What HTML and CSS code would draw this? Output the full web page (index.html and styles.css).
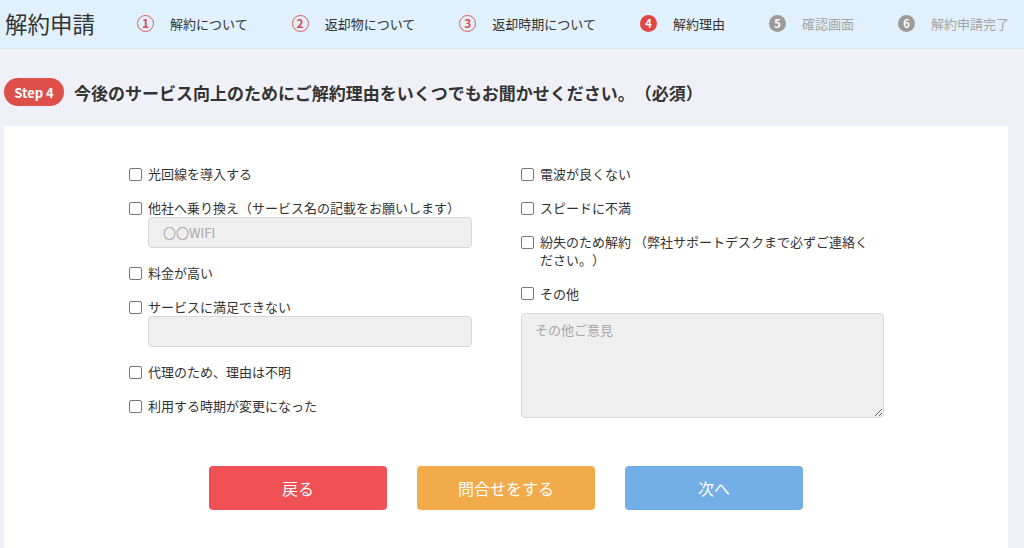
FILE: index.html
```html
<!DOCTYPE html>
<html lang="ja">
<head>
<meta charset="utf-8">
<title>解約申請</title>
<link rel="stylesheet" href="styles.css">
</head>
<body>
<header class="topbar">
  <h1 class="title">解約申請</h1>
  <ol class="steps">
    <li class="step done"><span class="num">1</span><span class="label">解約について</span></li>
    <li class="step done"><span class="num">2</span><span class="label">返却物について</span></li>
    <li class="step done"><span class="num">3</span><span class="label">返却時期について</span></li>
    <li class="step current"><span class="num">4</span><span class="label">解約理由</span></li>
    <li class="step todo"><span class="num">5</span><span class="label">確認画面</span></li>
    <li class="step todo"><span class="num">6</span><span class="label">解約申請完了</span></li>
  </ol>
</header>

<div class="heading">
  <span class="badge">Step 4</span>
  <h2 class="question">今後のサービス向上のためにご解約理由をいくつでもお聞かせください。（必須）</h2>
</div>

<main class="card">
  <div class="reasons">
    <div class="col">
      <div class="item"><label class="check"><span class="box"></span><span class="text">光回線を導入する</span></label></div>
      <div class="item">
        <label class="check"><span class="box"></span><span class="text">他社へ乗り換え（サービス名の記載をお願いします）</span></label>
        <input class="field" type="text" placeholder="〇〇WIFI">
      </div>
      <div class="item"><label class="check"><span class="box"></span><span class="text">料金が高い</span></label></div>
      <div class="item">
        <label class="check"><span class="box"></span><span class="text">サービスに満足できない</span></label>
        <input class="field" type="text">
      </div>
      <div class="item"><label class="check"><span class="box"></span><span class="text">代理のため、理由は不明</span></label></div>
      <div class="item"><label class="check"><span class="box"></span><span class="text">利用する時期が変更になった</span></label></div>
    </div>
    <div class="col">
      <div class="item"><label class="check"><span class="box"></span><span class="text">電波が良くない</span></label></div>
      <div class="item"><label class="check"><span class="box"></span><span class="text">スピードに不満</span></label></div>
      <div class="item"><label class="check"><span class="box"></span><span class="text narrow">紛失のため解約 （弊社サポートデスクまで必ずご連絡ください。）</span></label></div>
      <div class="item">
        <label class="check"><span class="box"></span><span class="text">その他</span></label>
        <textarea class="memo" placeholder="その他ご意見"></textarea>
      </div>
    </div>
  </div>
  <div class="actions">
    <button class="btn back" type="button">戻る</button>
    <button class="btn ask" type="button">問合せをする</button>
    <button class="btn next" type="button">次へ</button>
  </div>
</main>
</body>
</html>
```

FILE: styles.css
```css
* { box-sizing: border-box; }
html, body { margin: 0; padding: 0; }
body {
  background: #f0f1f8;
  font-family: "Noto Sans CJK JP", "Noto Sans", sans-serif;
  color: #333;
  overflow: hidden;
  text-spacing-trim: space-all;
}

.topbar {
  display: flex;
  align-items: center;
  height: 49px;
  padding: 0 0 2px 5px;
  background: #e0f0fc;
  border-bottom: 1px solid #d6e4ef;
}
.title {
  margin: 0 42px 0 0;
  font-size: 22.5px;
  font-weight: 400;
  line-height: 1;
  color: #333;
  white-space: nowrap;
}
.steps {
  display: flex;
  align-items: center;
  gap: 44px;
  margin: 0;
  padding: 0;
  list-style: none;
}
.step {
  display: flex;
  align-items: center;
  gap: 16px;
  font-size: 13px;
  white-space: nowrap;
}
.num {
  display: flex;
  align-items: center;
  justify-content: center;
  width: 17px;
  height: 17px;
  border-radius: 50%;
  font-size: 11px;
  font-weight: 700;
  line-height: 1;
}
.done .num { border: 1.4px solid #de5b5b; color: #d94f4f; font-weight: 700; font-size: 12px; }
.current .num { background: #e04646; color: #fff; }
.todo .num { background: #9b9b9b; color: #fff; }
.todo .label { color: #a5a5a5; }

.heading {
  display: flex;
  align-items: center;
  margin: 29px 0 20px 4px;
}
.badge {
  display: inline-flex;
  align-items: center;
  justify-content: center;
  width: 60px;
  height: 28px;
  border-radius: 14px;
  background: #df4f4a;
  color: #fff;
  font-size: 13px;
  font-weight: 700;
  margin-right: 10px;
}
.question {
  margin: 0;
  font-size: 17px;
  font-weight: 700;
  color: #333;
  white-space: nowrap;
}

.card {
  margin-left: 4px;
  width: 1004px;
  height: 430px;
  background: #fff;
  padding-top: 39px;
}
.reasons {
  display: grid;
  grid-template-columns: 342px 363px;
  column-gap: 50px;
  margin-left: 125px;
}
.col {
  display: flex;
  flex-direction: column;
  gap: 16.5px;
}
.item {
  display: flex;
  flex-direction: column;
}
.check {
  display: flex;
  align-items: flex-start;
  font-size: 13px;
  line-height: 17.5px;
  color: #333;
}
.box {
  flex: none;
  width: 13px;
  height: 13px;
  margin: 2.5px 6px 0 0;
  border: 1.5px solid #777;
  border-radius: 2px;
  background: #fff;
}
.text.narrow { max-width: 335px; }

.field {
  width: 324px;
  height: 31px;
  margin: 0 0 0 19px;
  padding: 0 14px;
  border: 1px solid #d8d8d8;
  border-radius: 4px;
  background: #efefef;
  font-family: inherit;
  font-size: 13px;
  color: #333;
}
.field::placeholder { color: #a8a8a8; }

.memo {
  width: 363px;
  height: 105px;
  margin-top: 11px;
  padding: 6px 13px;
  border: 1px solid #d8d8d8;
  border-radius: 4px;
  background: #efefef;
  font-family: inherit;
  font-size: 13px;
  color: #333;
}
.memo::placeholder { color: #a8a8a8; }

.actions {
  display: flex;
  justify-content: center;
  gap: 30px;
  margin-top: 48px;
}
.btn {
  width: 178px;
  height: 44px;
  border: none;
  border-radius: 4px;
  color: #fff;
  font-family: inherit;
  font-size: 16px;
}
.back { background: #ef5155; }
.ask { background: #f1ab4a; }
.next { background: #74aee6; }
```
